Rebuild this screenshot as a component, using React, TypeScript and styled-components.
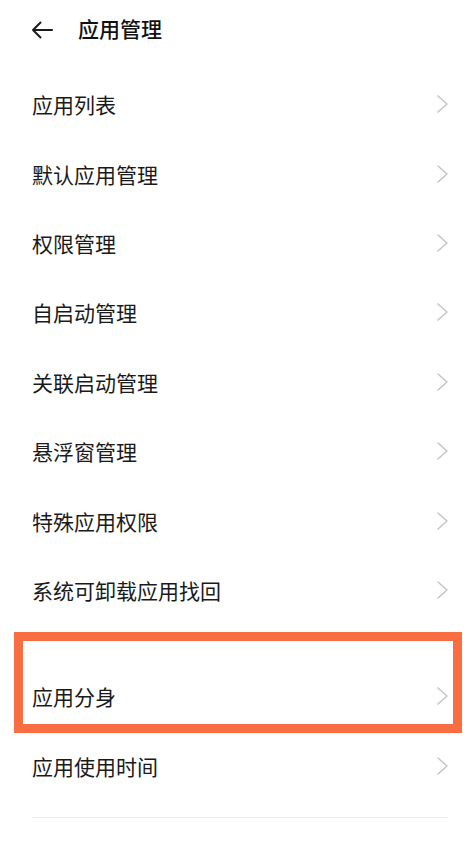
import React from 'react';
import styled, { createGlobalStyle } from 'styled-components';

const GlobalStyle = createGlobalStyle`
  html, body {
    margin: 0;
    padding: 0;
    background: #ffffff;
  }
  body {
    font-family: "Noto Sans CJK SC", "Noto Sans", sans-serif;
    color: #1a1a1a;
  }
`;

const mainItems = [
  '应用列表',
  '默认应用管理',
  '权限管理',
  '自启动管理',
  '关联启动管理',
  '悬浮窗管理',
  '特殊应用权限',
  '系统可卸载应用找回',
];

const moreItems = ['应用分身', '应用使用时间'];

const BackIcon = () => (
  <svg width="22" height="18" viewBox="0 0 22 18" fill="none">
    <path d="M21 9H2M9.5 1.5L2 9l7.5 7.5" stroke="#1a1a1a" strokeWidth="2" strokeLinecap="round" strokeLinejoin="round" />
  </svg>
);

const Chevron = () => (
  <svg width="11" height="18" viewBox="0 0 11 18" fill="none">
    <path d="M1 1l9 8-9 8" stroke="#c4c4c4" strokeWidth="1.5" strokeLinecap="round" strokeLinejoin="round" />
  </svg>
);

const App = () => {
  return (
    <Page>
      <GlobalStyle />
      <Header>
        <BackButton>
          <BackIcon />
        </BackButton>
        <Title>应用管理</Title>
      </Header>
      <List>
        {mainItems.map((label) => (
          <Row key={label}>
            <Label>{label}</Label>
            <Chevron />
          </Row>
        ))}
      </List>
      <Section>
        {moreItems.map((label) => (
          <Row key={label}>
            <Label>{label}</Label>
            <Chevron />
          </Row>
        ))}
        <Highlight />
      </Section>
      <Divider />
    </Page>
  );
};

const Page = styled.div`
  width: 473px;
  min-height: 846px;
  background: #ffffff;
  overflow: hidden;
`;

const Header = styled.div`
  display: flex;
  align-items: center;
  height: 56px;
  padding-left: 31px;
`;

const BackButton = styled.div`
  display: flex;
  align-items: center;
  width: 22px;
  height: 18px;
  margin-top: 3px;
  margin-right: 25px;
`;

const Title = styled.div`
  font-size: 21px;
  font-weight: 500;
  color: #111111;
`;

const List = styled.div`
  display: flex;
  flex-direction: column;
  padding-top: 13.5px;
`;

const Row = styled.div`
  display: flex;
  align-items: center;
  justify-content: space-between;
  height: 69.4px;
  padding: 0 25px 0 32px;
`;

const Label = styled.div`
  font-size: 21px;
  font-weight: 400;
  color: #1a1a1a;
`;

const Section = styled.div`
  position: relative;
  display: flex;
  flex-direction: column;
  padding-top: 37px;
`;

const Highlight = styled.div`
  position: absolute;
  top: 7px;
  left: 14px;
  width: 448px;
  height: 101px;
  box-sizing: border-box;
  border: 9.5px solid #f86d41;
  pointer-events: none;
`;

const Divider = styled.div`
  height: 1px;
  margin: 17px 25px 0 32px;
  background: #ebebeb;
`;

export default App;
